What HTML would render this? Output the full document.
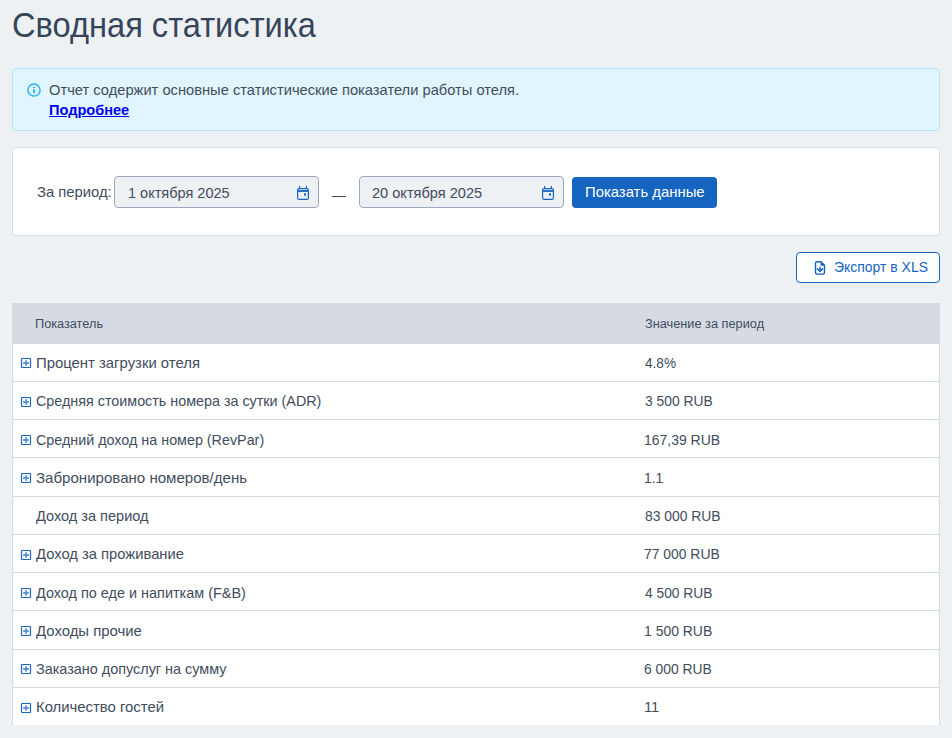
<!DOCTYPE html>
<html><head><meta charset="utf-8">
<style>
*{box-sizing:border-box;margin:0;padding:0}
html,body{width:952px;height:738px;overflow:hidden;background:#eef1f4;font-family:"Liberation Sans",sans-serif}
.abs{position:absolute}
.t{position:absolute;line-height:20px;white-space:nowrap}
.alert{position:absolute;left:12px;top:68px;width:928px;height:63px;background:#e1f5fe;border:1px solid #b3e5fc;border-radius:4px}
.panel{position:absolute;left:12px;top:147px;width:928px;height:89px;background:#fff;border:1px solid #d4dbe3;border-radius:4px}
.inp{position:absolute;top:176px;width:205px;height:32px;background:#eef1f4;border:1px solid #9aa9bd;border-radius:4px}
.dash{position:absolute;left:332px;top:196px;width:14px;height:1px;background:#3d4a5a}
.btn{position:absolute;left:572px;top:177px;width:145px;height:31px;background:#1565c0;border-radius:4px}
.exp{position:absolute;left:796px;top:252px;width:144px;height:31px;background:#fff;border:1px solid #1565c0;border-radius:4px}
.tbl{position:absolute;left:12px;top:303px;width:928px;height:422px;background:#fff;border-left:1px solid #d6dbe3;border-right:1px solid #d6dbe3}
.th{position:absolute;left:12px;top:303px;width:928px;height:41px;background:#d6dbe3}
.ln{position:absolute;left:13px;width:926px;height:1px;background:#d6dbe3}

</style></head><body>
<div class="t " style="left:11.77px;top:15.01px;font-size:34.6px;color:#364559;transform:scaleX(0.9434);transform-origin:0 0;">Сводная статистика</div>
<div class="alert"></div>
<svg class="abs" style="left:26px;top:82px" width="16" height="16" viewBox="26 82 16 16"><circle cx="34" cy="90" r="6.1" fill="none" stroke="#29b6f6" stroke-width="1.5"/><rect x="33" y="89.4" width="2" height="3.7" fill="#29b6f6"/><rect x="33" y="86.8" width="2" height="1.3" fill="#29b6f6"/></svg>
<div class="t " style="left:48.87px;top:79.98px;font-size:14.5px;color:#414d5d;transform:scaleX(1.013);transform-origin:0 0;">Отчет содержит основные статистические показатели работы отеля.</div>
<div class="t " style="left:48.98px;top:99.98px;font-size:14.5px;color:#0000ee;font-weight:bold;text-decoration:underline;transform:scaleX(1.0038);transform-origin:0 0;">Подробнее</div>
<div class="panel"></div>
<div class="t " style="left:36.51px;top:181.98px;font-size:14.5px;color:#414d5d;transform:scaleX(1.0211);transform-origin:0 0;">За период:</div>
<div class="inp" style="left:114px"></div>
<div class="t " style="left:127.64px;top:182.98px;font-size:14.5px;color:#414d5d;transform:scaleX(1.0014);transform-origin:0 0;">1 октября 2025</div>
<svg class="abs" style="left:295px;top:184px" width="16" height="18" viewBox="295 184 16 18"><rect x="297.6" y="188.6" width="10.8" height="10.8" rx="1.5" fill="none" stroke="#1565c0" stroke-width="1.2"/><rect x="297.5" y="190" width="11" height="2" fill="#2a72c6"/><path d="M299.6 186v3M306.4 186v3" stroke="#1565c0" stroke-width="1.2"/><rect x="304" y="193.3" width="2" height="2.3" fill="#1565c0"/></svg>
<div class="dash"></div>
<div class="inp" style="left:359px"></div>
<div class="t " style="left:371.57px;top:182.98px;font-size:14.5px;color:#414d5d;transform:scaleX(1.0049);transform-origin:0 0;">20 октября 2025</div>
<svg class="abs" style="left:540px;top:184px" width="16" height="18" viewBox="295 184 16 18"><rect x="297.6" y="188.6" width="10.8" height="10.8" rx="1.5" fill="none" stroke="#1565c0" stroke-width="1.2"/><rect x="297.5" y="190" width="11" height="2" fill="#2a72c6"/><path d="M299.6 186v3M306.4 186v3" stroke="#1565c0" stroke-width="1.2"/><rect x="304" y="193.3" width="2" height="2.3" fill="#1565c0"/></svg>
<div class="btn"></div>
<div class="t " style="left:585.31px;top:181.98px;font-size:14.5px;color:#fff;transform:scaleX(1.0249);transform-origin:0 0;">Показать данные</div>
<div class="exp"></div>
<svg class="abs" style="left:812px;top:259px" width="16" height="18" viewBox="812 259 16 18"><path d="M817 261.8H821L824.5 265.3V272.6Q824.5 274.1 823 274.1H817Q815.5 274.1 815.5 272.6V263.3Q815.5 261.8 817 261.8Z" fill="none" stroke="#1565c0" stroke-width="1.4" stroke-linejoin="round"/><path d="M820.6 261.4V265.7H825Z" fill="#1565c0"/><path d="M820 266.8V271" stroke="#1565c0" stroke-width="1.5"/><path d="M817.4 268.9L820 271.5L822.6 268.9" fill="none" stroke="#1565c0" stroke-width="1.5" stroke-linecap="round" stroke-linejoin="round"/></svg>
<div class="t " style="left:833.66px;top:256.98px;font-size:14.5px;color:#1565c0;transform:scaleX(0.9622);transform-origin:0 0;">Экспорт в XLS</div>
<div class="tbl"></div>
<div class="th"></div>
<div class="t " style="left:35.28px;top:313.67px;font-size:12.5px;color:#414d5d;transform:scaleX(1.0176);transform-origin:0 0;">Показатель</div>
<div class="t " style="left:644.59px;top:313.67px;font-size:12.5px;color:#414d5d;transform:scaleX(1.0207);transform-origin:0 0;">Значение за период</div>
<svg class="abs" style="left:20px;top:357px" width="12" height="12" viewBox="20 357 12 12"><rect x="21.5" y="358.5" width="9" height="9" rx="0.7" fill="none" stroke="#1a66c2" stroke-width="1.2"/><path d="M26 360.2v5.6M23.2 363h5.6" stroke="#5b96da" stroke-width="1.8"/></svg>
<div class="t " style="left:35.51px;top:352.98px;font-size:14.5px;color:#414d5d;transform:scaleX(1.0259);transform-origin:0 0;">Процент загрузки отеля</div>
<div class="t " style="left:644.83px;top:352.98px;font-size:14.5px;color:#414d5d;transform:scaleX(0.9382);transform-origin:0 0;">4.8%</div>
<div class="ln" style="top:381px"></div>
<svg class="abs" style="left:20px;top:396px" width="12" height="12" viewBox="20 396 12 12"><rect x="21.5" y="397.5" width="9" height="9" rx="0.7" fill="none" stroke="#1a66c2" stroke-width="1.2"/><path d="M26 399.2v5.6M23.2 402h5.6" stroke="#5b96da" stroke-width="1.8"/></svg>
<div class="t " style="left:35.98px;top:390.98px;font-size:14.5px;color:#414d5d;transform:scaleX(0.9882);transform-origin:0 0;">Средняя стоимость номера за сутки (ADR)</div>
<div class="t " style="left:644.55px;top:390.98px;font-size:14.5px;color:#414d5d;transform:scaleX(0.954);transform-origin:0 0;">3 500 RUB</div>
<div class="ln" style="top:419px"></div>
<svg class="abs" style="left:20px;top:434px" width="12" height="12" viewBox="20 434 12 12"><rect x="21.5" y="435.5" width="9" height="9" rx="0.7" fill="none" stroke="#1a66c2" stroke-width="1.2"/><path d="M26 437.2v5.6M23.2 440h5.6" stroke="#5b96da" stroke-width="1.8"/></svg>
<div class="t " style="left:35.98px;top:429.98px;font-size:14.5px;color:#414d5d;transform:scaleX(0.9878);transform-origin:0 0;">Средний доход на номер (RevPar)</div>
<div class="t " style="left:643.98px;top:429.98px;font-size:14.5px;color:#414d5d;transform:scaleX(0.9637);transform-origin:0 0;">167,39 RUB</div>
<div class="ln" style="top:457px"></div>
<svg class="abs" style="left:20px;top:472px" width="12" height="12" viewBox="20 472 12 12"><rect x="21.5" y="473.5" width="9" height="9" rx="0.7" fill="none" stroke="#1a66c2" stroke-width="1.2"/><path d="M26 475.2v5.6M23.2 478h5.6" stroke="#5b96da" stroke-width="1.8"/></svg>
<div class="t " style="left:36.10px;top:467.98px;font-size:14.5px;color:#414d5d;transform:scaleX(1.0387);transform-origin:0 0;">Забронировано номеров/день</div>
<div class="t " style="left:643.99px;top:467.98px;font-size:14.5px;color:#414d5d;transform:scaleX(0.9579);transform-origin:0 0;">1.1</div>
<div class="ln" style="top:496px"></div>
<div class="t " style="left:35.55px;top:505.98px;font-size:14.5px;color:#414d5d;transform:scaleX(1.0027);transform-origin:0 0;">Доход за период</div>
<div class="t " style="left:644.55px;top:505.98px;font-size:14.5px;color:#414d5d;transform:scaleX(0.9565);transform-origin:0 0;">83 000 RUB</div>
<div class="ln" style="top:534px"></div>
<svg class="abs" style="left:20px;top:549px" width="12" height="12" viewBox="20 549 12 12"><rect x="21.5" y="550.5" width="9" height="9" rx="0.7" fill="none" stroke="#1a66c2" stroke-width="1.2"/><path d="M26 552.2v5.6M23.2 555h5.6" stroke="#5b96da" stroke-width="1.8"/></svg>
<div class="t " style="left:35.55px;top:543.98px;font-size:14.5px;color:#414d5d;transform:scaleX(1.0182);transform-origin:0 0;">Доход за проживание</div>
<div class="t " style="left:644.41px;top:543.98px;font-size:14.5px;color:#414d5d;transform:scaleX(0.9583);transform-origin:0 0;">77 000 RUB</div>
<div class="ln" style="top:572px"></div>
<svg class="abs" style="left:20px;top:587px" width="12" height="12" viewBox="20 587 12 12"><rect x="21.5" y="588.5" width="9" height="9" rx="0.7" fill="none" stroke="#1a66c2" stroke-width="1.2"/><path d="M26 590.2v5.6M23.2 593h5.6" stroke="#5b96da" stroke-width="1.8"/></svg>
<div class="t " style="left:35.56px;top:582.98px;font-size:14.5px;color:#414d5d;transform:scaleX(0.9952);transform-origin:0 0;">Доход по еде и напиткам (F&amp;B)</div>
<div class="t " style="left:644.82px;top:582.98px;font-size:14.5px;color:#414d5d;transform:scaleX(0.9501);transform-origin:0 0;">4 500 RUB</div>
<div class="ln" style="top:610px"></div>
<svg class="abs" style="left:20px;top:625px" width="12" height="12" viewBox="20 625 12 12"><rect x="21.5" y="626.5" width="9" height="9" rx="0.7" fill="none" stroke="#1a66c2" stroke-width="1.2"/><path d="M26 628.2v5.6M23.2 631h5.6" stroke="#5b96da" stroke-width="1.8"/></svg>
<div class="t " style="left:35.55px;top:620.98px;font-size:14.5px;color:#414d5d;transform:scaleX(1.0281);transform-origin:0 0;">Доходы прочие</div>
<div class="t " style="left:643.98px;top:620.98px;font-size:14.5px;color:#414d5d;transform:scaleX(0.962);transform-origin:0 0;">1 500 RUB</div>
<div class="ln" style="top:649px"></div>
<svg class="abs" style="left:20px;top:663px" width="12" height="12" viewBox="20 663 12 12"><rect x="21.5" y="664.5" width="9" height="9" rx="0.7" fill="none" stroke="#1a66c2" stroke-width="1.2"/><path d="M26 666.2v5.6M23.2 669h5.6" stroke="#5b96da" stroke-width="1.8"/></svg>
<div class="t " style="left:36.12px;top:658.98px;font-size:14.5px;color:#414d5d;transform:scaleX(0.9937);transform-origin:0 0;">Заказано допуслуг на сумму</div>
<div class="t " style="left:644.41px;top:658.98px;font-size:14.5px;color:#414d5d;transform:scaleX(0.956);transform-origin:0 0;">6 000 RUB</div>
<div class="ln" style="top:687px"></div>
<svg class="abs" style="left:20px;top:702px" width="12" height="12" viewBox="20 702 12 12"><rect x="21.5" y="703.5" width="9" height="9" rx="0.7" fill="none" stroke="#1a66c2" stroke-width="1.2"/><path d="M26 705.2v5.6M23.2 708h5.6" stroke="#5b96da" stroke-width="1.8"/></svg>
<div class="t " style="left:35.51px;top:696.98px;font-size:14.5px;color:#414d5d;transform:scaleX(1.0255);transform-origin:0 0;">Количество гостей</div>
<div class="t " style="left:643.92px;top:696.98px;font-size:14.5px;color:#414d5d;transform:scaleX(1.0155);transform-origin:0 0;">11</div>
</body></html>
